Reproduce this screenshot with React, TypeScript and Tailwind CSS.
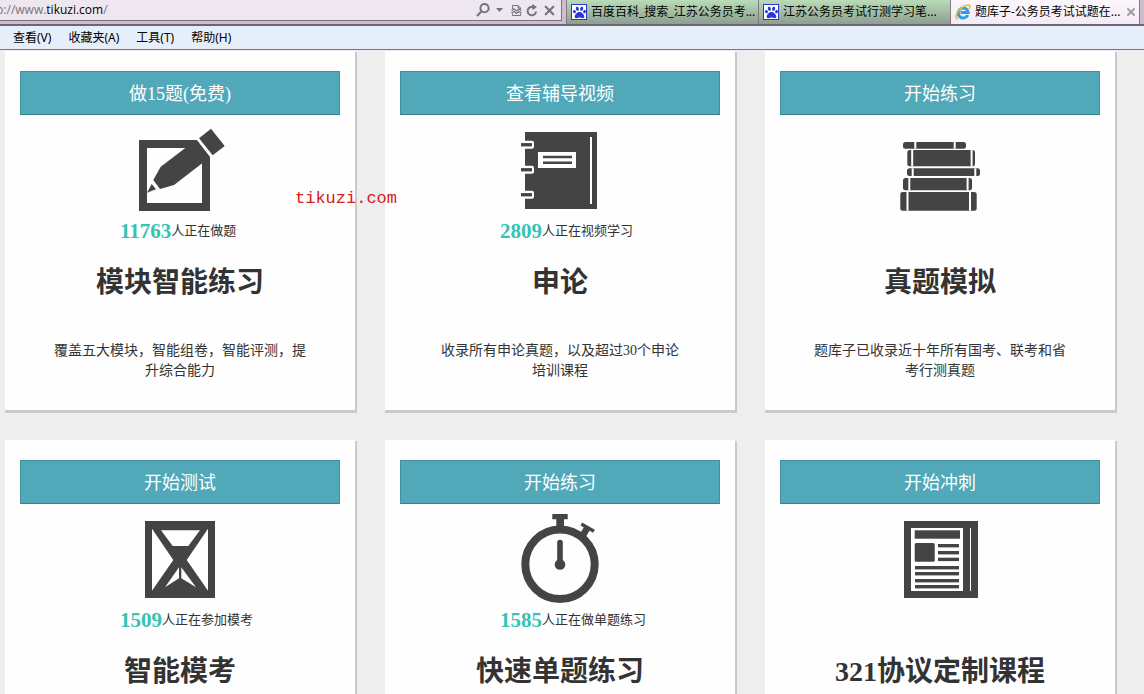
import React, { useState } from "react";
import { X } from "lucide-react";
import { FaPaw } from "react-icons/fa";

const IconPencil = () => (
  <>
    <path
      fillRule="evenodd"
      d="M9 20H66.7L80 37.3V91H9ZM17 28V83H72V28Z"
    />
    <path d="M66.7 20L80 37.3L44 65L30 69L23.3 60L30.7 46.7L55.3 28Z" />
    <path d="M81 8.7L94.7 26L82.7 35.3L69 18.3Z" />
    <path d="M21.7 64L26 69.3L17 72.7Z" />
  </>
);

const IconNotebook = () => (
  <>
    <path d="M15 12H87V89H15Z" />
    <path fill="#fff" d="M80 17H82V84H80ZM28 32H66V48H28Z" />
    <path d="M33 35.7H62V38.3H33ZM33 41.4H62V44H33Z" />
    {[24.7, 49.7, 74.7].map((y) => (
      <g key={y}>
        <rect x="12" y={y - 4} width="12" height="8" rx="2" fill="#fff" />
        <rect x="11" y={y - 1.6} width="11" height="3.3" />
      </g>
    ))}
  </>
);

const books = [
  { x: 13, y: 22, w: 63, h: 6.7, gaps: [24.3, 63.7] },
  { x: 17.3, y: 30, w: 67.7, h: 16.3, gaps: [21.2, 80.6] },
  { x: 17, y: 48.3, w: 73, h: 7.7, gaps: [21.7, 84.3] },
  { x: 13, y: 58, w: 69, h: 12.3, gaps: [18.3, 76.6] },
  { x: 10.3, y: 72, w: 76.4, h: 18.7, gaps: [16.5, 79] },
];

const IconBooks = () => (
  <>
    {books.map((book) => (
      <g key={book.y}>
        <rect x={book.x} y={book.y} width={book.w} height={book.h} rx="2.5" />
        {book.gaps.map((gap) => (
          <rect
            key={gap}
            x={gap}
            y={book.y}
            width="2"
            height={book.h}
            fill="#fff"
          />
        ))}
      </g>
    ))}
  </>
);

const IconHourglass = () => (
  <>
    <path d="M15 12H85V89H15Z" />
    <g fill="#fff">
      <path d="M22 19.7L43.3 51L22 81.7Z" />
      <path d="M78 19.7L56.7 51L78 81.7Z" />
      <path d="M31 21.3H70L58.3 37H42.7Z" />
      <path d="M49 58.3V69.3L35 78.3Z" />
      <path d="M51.3 58.3V69.3L66 78.3Z" />
    </g>
  </>
);

const IconStopwatch = () => (
  <>
    <circle
      cx="50"
      cy="55.3"
      r="34.7"
      fill="none"
      stroke="#444"
      strokeWidth="8"
    />
    <path d="M42.3 5H57.7V10.3H54V20H46.3V10.3H42.3Z" />
    <path d="M71.3 15L84 22.3" stroke="#444" strokeWidth="3.4" />
    <path d="M77.5 18.5L72.5 27" stroke="#444" strokeWidth="6.5" />
    <path
      d="M50 33.5V55"
      stroke="#444"
      strokeWidth="5.6"
      strokeLinecap="round"
    />
    <circle cx="50" cy="55.5" r="5.3" />
  </>
);

const IconNewspaper = () => (
  <>
    <path d="M14 12H88V89H14Z" />
    <path fill="#fff" d="M21 19H73V82H21ZM80 19H81V82H80Z" />
    <rect x="24.7" y="21.3" width="45.3" height="8.4" />
    <rect x="24.7" y="34" width="20" height="18.7" rx="1.5" />
    {[35, 42, 48.7].map((y) => (
      <rect key={y} x="48" y={y} width="21" height="3.4" />
    ))}
    {[57, 63, 70, 76].map((y) => (
      <rect key={y} x="25" y={y} width="44" height="3.4" />
    ))}
  </>
);

const IconExplorer = () => (
  <svg viewBox="0 0 16 16" className="w-4 h-4 shrink-0">
    <path
      d="M12.8 11A5 5 0 1 1 13.2 8.5H5.5"
      fill="none"
      stroke="#2f9fe0"
      strokeWidth="3"
    />
    <path
      d="M2.2 14.9C-.6 13.6 1.6 8 6.2 4.2C9.8 1.2 14 .2 14.8 1.9C15.1 2.6 14.9 3.6 14.4 4.6"
      fill="none"
      stroke="#f2b632"
      strokeWidth="1.6"
      strokeLinecap="round"
    />
  </svg>
);

interface ICard {
  action: string;
  icon: React.ReactNode;
  count?: string;
  countText?: string;
  title: string;
  desc?: string;
}

const cards: ICard[] = [
  {
    action: "做15题(免费)",
    icon: <IconPencil />,
    count: "11763",
    countText: "人正在做题",
    title: "模块智能练习",
    desc: "覆盖五大模块，智能组卷，智能评测，提升综合能力",
  },
  {
    action: "查看辅导视频",
    icon: <IconNotebook />,
    count: "2809",
    countText: "人正在视频学习",
    title: "申论",
    desc: "收录所有申论真题，以及超过30个申论\n培训课程",
  },
  {
    action: "开始练习",
    icon: <IconBooks />,
    title: "真题模拟",
    desc: "题库子已收录近十年所有国考、联考和省考行测真题",
  },
  {
    action: "开始测试",
    icon: <IconHourglass />,
    count: "1509",
    countText: "人正在参加模考",
    title: "智能模考",
  },
  {
    action: "开始练习",
    icon: <IconStopwatch />,
    count: "1585",
    countText: "人正在做单题练习",
    title: "快速单题练习",
  },
  {
    action: "开始冲刺",
    icon: <IconNewspaper />,
    title: "321协议定制课程",
  },
];

const menus = ["查看(V)", "收藏夹(A)", "工具(T)", "帮助(H)"];

const tabs = [
  { text: "百度百科_搜索_江苏公务员考...", active: false },
  { text: "江苏公务员考试行测学习笔...", active: false },
  { text: "题库子-公务员考试试题在...", active: true },
];

const AddressBar = () => {
  const [host, setHost] = useState("tikuzi.com");
  return (
    <div className="flex-1 min-w-0 h-[21px] mr-1 flex items-center justify-between border-r border-b border-[#77717a] bg-[#efe7ef] overflow-hidden">
      <label className="flex -ml-1 text-xs leading-5 font-['Open_Sans','Noto_Sans_CJK_SC',sans-serif] text-[#77737a]">
        p://www.
        <input
          aria-label="host"
          value={host}
          onChange={(e) => setHost(e.target.value)}
          className="field-sizing-content text-black outline-none"
        />
        /
      </label>
      <div className="flex items-center gap-1 pr-1 text-[#77717a]">
        <button aria-label="search">
          <svg
            viewBox="0 0 14 14"
            className="w-[14px] h-[14px] fill-none stroke-current stroke-2"
          >
            <circle cx="8.5" cy="5.2" r="4.1" />
            <path d="M5.5 8.3L1 13" />
          </svg>
        </button>
        <button aria-label="history" className="px-[2px]">
          <svg viewBox="0 0 7 4" className="w-[7px] h-1 fill-current">
            <path d="M0 0H7L3.5 4Z" />
          </svg>
        </button>
        <button aria-label="compatibility" className="pl-[2px]">
          <svg
            viewBox="0 0 11 13"
            className="w-[11px] h-[13px] fill-none stroke-current"
          >
            <path d="M1.5 5V1.5H7L9.5 4V5M7 1.5V4H9.5M1.5 9.5V11.5H9.5V9.5" />
            <path
              d="M.5 6.5L3 5L5.5 7L8 5L10.5 6.5M.5 9L3 7.5L5.5 9.5L8 7.5L10.5 9"
              strokeWidth="1.3"
            />
          </svg>
        </button>
        <button aria-label="refresh">
          <svg
            viewBox="0 0 12 13"
            className="w-3 h-[13px] fill-none stroke-current stroke-2"
          >
            <path d="M7.5 3.2A4.2 4.2 0 1 0 10 7.5" />
            <path d="M6 0L11 3L6.5 6.2Z" className="fill-current stroke-0" />
          </svg>
        </button>
        <button aria-label="stop">
          <X size={15} strokeWidth={3.5} />
        </button>
      </div>
    </div>
  );
};

const Card = ({ card }: { card: ICard }) => {
  return (
    <div className="bg-[#fefefe] px-[15px] pt-5 pb-[29px] shadow-[1px_2px_0_1px_#c9cacf] text-[#333] text-center">
      <button className="block w-full h-11 pt-[2px] bg-[#50a8b9] border border-[#43919f] border-b-[#38808d] text-white text-lg">
        {card.action}
      </button>
      <svg
        viewBox="0 0 100 95"
        className="block w-[100px] h-[95px] mx-auto mt-[5px] fill-[#444]"
      >
        {card.icon}
      </svg>
      <p className="flex items-center h-8 pl-[100px] text-[13px] leading-8 whitespace-nowrap">
        {card.count && (
          <span className="text-[21px] font-bold text-[#36c2b4]">
            {card.count}
          </span>
        )}
        {card.countText}
      </p>
      <h2 className="mt-4 text-[28px] leading-10 font-bold">{card.title}</h2>
      <p className="mt-[38px] mx-auto max-w-[252px] min-h-10 text-sm leading-5 whitespace-pre-line">
        {card.desc}
      </p>
    </div>
  );
};

export default function App() {
  return (
    <div className="h-screen flex flex-col overflow-hidden bg-[#eee] font-['Liberation_Serif','Noto_Sans_CJK_SC',sans-serif]">
      <header className="shrink-0 font-['Noto_Sans','Noto_Sans_CJK_SC',sans-serif] text-xs text-black">
        <div className="flex h-[26px] bg-[#cdbdcd] border-b-2 border-[#6c6672]">
          <AddressBar />
          <div className="flex">
            {tabs.map((tab) => (
              <div
                key={tab.text}
                className={
                  tab.active
                    ? "w-[190px] flex items-center gap-1 px-1 border-x border-[#827887] bg-linear-to-b from-[#fbf7fc] to-[#f3eaf5]"
                    : "w-[192px] flex items-center gap-1 px-1 border-l border-[#827887] bg-linear-to-b from-[#b9dcb7] to-[#8d9f91]"
                }
              >
                {tab.active ? (
                  <IconExplorer />
                ) : (
                  <span className="w-4 h-4 shrink-0 flex items-center justify-center bg-white border border-[#2b35d8] text-[#2b35d8]">
                    <FaPaw size={13} />
                  </span>
                )}
                <a href="#" className="flex-1 whitespace-nowrap">
                  {tab.text}
                </a>
                {tab.active && (
                  <button aria-label="close" className="text-[#a39ea6]">
                    <X size={12} strokeWidth={4} />
                  </button>
                )}
              </div>
            ))}
            <div className="w-1"></div>
          </div>
        </div>
        <nav className="flex items-center gap-[17px] h-6 px-[13px] bg-[#e6eef9] border-b border-[#737780]">
          {menus.map((menu) => (
            <button key={menu}>{menu}</button>
          ))}
        </nav>
      </header>
      <main className="relative flex-1 min-h-0 overflow-hidden">
        <div className="grid grid-cols-3 gap-[30px] pt-px pl-[5px] pr-[29px]">
          {cards.map((card) => (
            <Card key={card.title} card={card} />
          ))}
        </div>
        <span className="absolute left-[295px] top-[137px] text-[17px] leading-6 text-[#d42020] font-['Liberation_Mono',monospace]">
          tikuzi.com
        </span>
      </main>
    </div>
  );
}
